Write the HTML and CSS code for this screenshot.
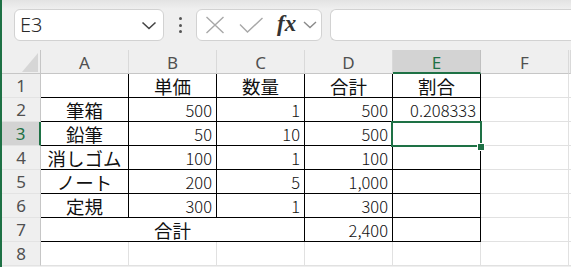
FILE: index.html
```html
<!DOCTYPE html>
<html lang="ja">
<head>
  <meta charset="UTF-8">
  <title>Book1 - Excel</title>
  <link rel="stylesheet" href="styles.css">
</head>
<body>
  <div class="app">
    <div class="edge"></div>
    <div class="main">

      <!-- 数式バー -->
      <div class="toolbar">
        <div class="namebox">
          <span>E3</span>
          <svg class="chev" width="16" height="9" viewBox="0 0 16 9"><path d="M1.5 1.5 L8 7.5 L14.5 1.5" fill="none" stroke="#444" stroke-width="1.6"/></svg>
        </div>
        <div class="dots"><i></i><i></i><i></i></div>
        <div class="fxbox">
          <svg width="20" height="18" viewBox="0 0 20 18"><path d="M1.5 1 L18.5 17 M18.5 1 L1.5 17" stroke="#a8a8a8" stroke-width="1.4" fill="none"/></svg>
          <svg class="check" width="25" height="17" viewBox="0 0 25 17"><path d="M1 7.5 L8.5 15 L23.5 1" stroke="#a8a8a8" stroke-width="1.4" fill="none"/></svg>
          <span class="fx">fx</span>
          <svg class="chev-s" width="14" height="8" viewBox="0 0 14 8"><path d="M1 1 L7 6.5 L13 1" fill="none" stroke="#8a8a8a" stroke-width="1.4"/></svg>
        </div>
        <div class="formula"></div>
      </div>

      <!-- シート -->
      <div class="sheet">
        <div class="hd corner"><svg width="16" height="19" viewBox="0 0 16 19"><path d="M16 0 L16 19 L0 19 Z" fill="#d6d6d6"/></svg></div>
        <div class="hd">A</div>
        <div class="hd">B</div>
        <div class="hd">C</div>
        <div class="hd">D</div>
        <div class="hd sel">E</div>
        <div class="hd">F</div>
        <div class="hd g"></div>

        <div class="rh">1</div>
        <div class="c b"></div>
        <div class="c b txt">単価</div>
        <div class="c b txt">数量</div>
        <div class="c b txt">合計</div>
        <div class="c b txt">割合</div>
        <div class="c"></div>
        <div class="c g"></div>

        <div class="rh">2</div>
        <div class="c b txt">筆箱</div>
        <div class="c b num">500</div>
        <div class="c b num">1</div>
        <div class="c b num">500</div>
        <div class="c b num">0.208333</div>
        <div class="c"></div>
        <div class="c g"></div>

        <div class="rh sel">3</div>
        <div class="c b txt">鉛筆</div>
        <div class="c b num">50</div>
        <div class="c b num">10</div>
        <div class="c b num">500</div>
        <div class="c b active"><div class="cursor"><i class="handle"></i></div></div>
        <div class="c"></div>
        <div class="c g"></div>

        <div class="rh">4</div>
        <div class="c b txt">消しゴム</div>
        <div class="c b num">100</div>
        <div class="c b num">1</div>
        <div class="c b num">100</div>
        <div class="c b"></div>
        <div class="c"></div>
        <div class="c g"></div>

        <div class="rh">5</div>
        <div class="c b txt">ノート</div>
        <div class="c b num">200</div>
        <div class="c b num">5</div>
        <div class="c b num">1,000</div>
        <div class="c b"></div>
        <div class="c"></div>
        <div class="c g"></div>

        <div class="rh">6</div>
        <div class="c b txt">定規</div>
        <div class="c b num">300</div>
        <div class="c b num">1</div>
        <div class="c b num">300</div>
        <div class="c b"></div>
        <div class="c"></div>
        <div class="c g"></div>

        <div class="rh">7</div>
        <div class="c b txt span3">合計</div>
        <div class="c b num">2,400</div>
        <div class="c b"></div>
        <div class="c"></div>
        <div class="c g"></div>

        <div class="rh">8</div>
        <div class="c"></div>
        <div class="c"></div>
        <div class="c"></div>
        <div class="c"></div>
        <div class="c"></div>
        <div class="c"></div>
        <div class="c g"></div>
      </div>

    </div>
  </div>
</body>
</html>
```

FILE: styles.css
```css
body {
  margin: 0;
  padding: 0;
  background: #efefef;
  font-family: "Noto Sans CJK JP", sans-serif;
  overflow: hidden;
}

.app {
  display: flex;
  height: 267px;
}

.edge {
  width: 2px;
  background: #1e7145;
  flex: none;
}

.main {
  flex: 1;
  min-width: 0;
}

/* 数式バー */
.toolbar {
  height: 50px;
  box-sizing: border-box;
  display: flex;
  align-items: flex-start;
  padding-top: 9px;
  background: linear-gradient(#e3e3e3, #efefef 9px);
}

.namebox {
  margin-left: 12px;
  width: 150px;
  height: 32px;
  box-sizing: border-box;
  border: 1px solid #d2d2d2;
  border-radius: 6px;
  background: #fff;
  display: flex;
  align-items: center;
  padding: 0 6px 0 5px;
}

.namebox span {
  flex: 1;
  font-family: "Noto Sans", sans-serif;
  font-size: 20px;
  font-weight: 300;
  color: #2a2a2a;
  line-height: 1;
}

.dots {
  margin-left: 15px;
  width: 3px;
  display: flex;
  flex-direction: column;
  gap: 3.5px;
  padding-top: 8px;
}

.dots i {
  display: block;
  width: 3px;
  height: 3px;
  border-radius: 50%;
  background: #555;
}

.fxbox {
  margin-left: 14px;
  width: 126px;
  height: 32px;
  box-sizing: border-box;
  border: 1px solid #d2d2d2;
  border-radius: 6px;
  background: #fff;
  display: flex;
  align-items: center;
  padding-left: 8px;
}

.fxbox .check {
  margin-left: 14px;
}

.fx {
  margin-left: 13px;
  font-family: "Liberation Serif", serif;
  font-style: italic;
  font-weight: bold;
  font-size: 23px;
  color: #333;
  line-height: 1;
  margin-top: -3px;
}

.chev-s {
  margin-left: 7px;
}

.formula {
  margin-left: 8px;
  flex: 1;
  height: 32px;
  box-sizing: border-box;
  border: 1px solid #d2d2d2;
  border-right: none;
  border-radius: 6px 0 0 6px;
  background: #fff;
}

/* シート */
.sheet {
  display: grid;
  grid-template-columns: 39px repeat(6, 88px) 1fr;
  grid-auto-rows: 24px;
}

.hd, .rh, .c {
  box-sizing: border-box;
  border-right: 1px solid #e1e1e1;
  border-bottom: 1px solid #e1e1e1;
  display: flex;
  align-items: center;
}

.hd {
  background: #efefef;
  border-right-color: #d9d9d9;
  border-bottom-color: #c6c6c6;
  justify-content: center;
  font-family: "Noto Sans", sans-serif;
  font-size: 17px;
  color: #505050;
  padding-top: 2px;
}

.hd.corner {
  justify-content: flex-end;
  align-items: flex-end;
  padding: 0 2px 1px 0;
  border-right-color: #c6c6c6;
}

.hd.corner svg {
  display: block;
}

.hd.sel {
  background: #d3d3d3;
  color: #1e7145;
  border-bottom: 2px solid #1e7145;
  border-right-color: #c0c0c0;
}

.rh {
  background: #efefef;
  border-right-color: #c6c6c6;
  border-bottom-color: #e3e3e3;
  justify-content: center;
  font-family: "Noto Sans", sans-serif;
  font-size: 17px;
  color: #505050;
}

.rh.sel {
  background: #d3d3d3;
  color: #1e7145;
  border-right: 2px solid #1e7145;
}

.c {
  background: #fff;
  color: #111;
  white-space: nowrap;
}

.c.b {
  border-right-color: #000;
  border-bottom-color: #000;
}

.c.g {
  border-right: none;
}

.txt {
  justify-content: center;
  font-size: 18.5px;
}

.num {
  justify-content: flex-end;
  padding-right: 4px;
  font-size: 16.5px;
  font-weight: 300;
}

.span3 {
  grid-column: span 3;
}

/* 選択セル */
.active {
  position: relative;
}

.cursor {
  position: absolute;
  left: -2px;
  top: -1px;
  width: 91px;
  height: 26px;
  box-sizing: border-box;
  border: 2px solid #1e7145;
  z-index: 2;
}

.handle {
  position: absolute;
  left: 84px;
  top: 20px;
  width: 6px;
  height: 6px;
  background: #1e7145;
  border: 1px solid #fff;
}
```
